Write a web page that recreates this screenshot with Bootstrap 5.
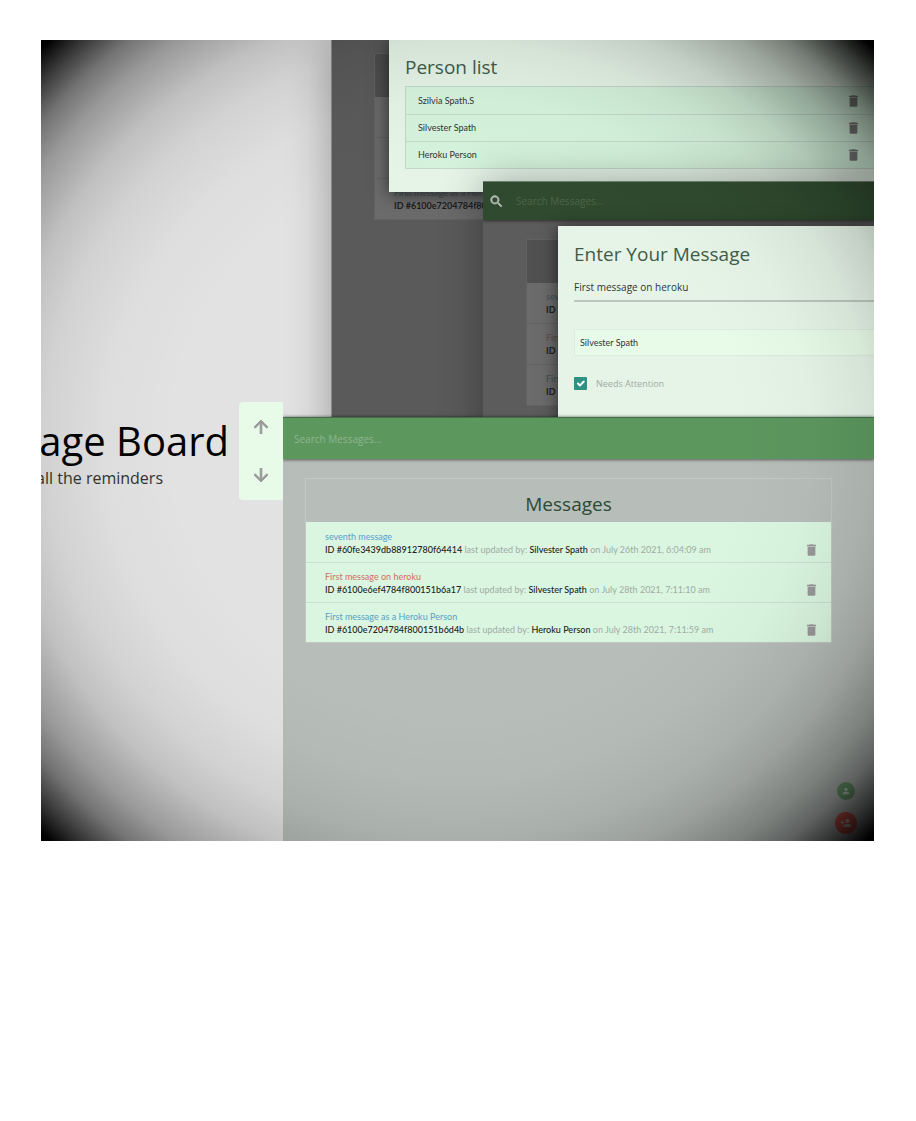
<!DOCTYPE html>
<html lang="en">
<head>
<meta charset="utf-8">
<meta name="viewport" content="width=device-width, initial-scale=1">
<title>Message Board</title>
<link href="https://cdn.jsdelivr.net/npm/bootstrap@5.3.0/dist/css/bootstrap.min.css" rel="stylesheet">
<style>
body { font-family: "Open Sans", "Noto Sans", sans-serif; background: #fff; }
.showcase { position: relative; margin: 40px 42px 0 41px; background: #e2e2e2; overflow: hidden; }
/* darkened corners over the whole showcase */
.showcase::after {
  content: ""; position: absolute; inset: 0; z-index: 5; pointer-events: none;
  background: radial-gradient(ellipse farthest-corner, transparent 48%, rgba(0,0,0,.02) 60%, rgba(0,0,0,.07) 70%, rgba(0,0,0,.15) 77%, rgba(0,0,0,.32) 85%, rgba(0,0,0,.49) 90%, rgba(0,0,0,.76) 95%, #000 99%);
}
.intro { flex: 0 0 242px; min-width: 0; overflow: hidden; padding-top: 20px; white-space: nowrap; }
.intro-text { padding: 6px 10px 0 0; }
.intro h1 { font-size: 40px; line-height: 48px; color: #000; }
.intro p { font-size: 16px; line-height: 26px; color: #333; padding-right: 66px; }
.pager { flex: 0 0 44px; height: 98px; padding: 18px 0; background: #e8fbe8; border-radius: 4px 0 0 4px; }
.plain { border: 0; background: none; padding: 0; line-height: 0; color: #999; }
.gallery { display: grid; flex: 1 1 0; min-width: 0; overflow: hidden; }
.shot { display: grid; grid-area: 1 / 1; grid-template-columns: minmax(0, 1fr); align-content: start; min-width: 0; overflow: hidden; box-shadow: 0 0 40px rgba(0,0,0,.32); }
.shot > * { grid-area: 1 / 1; }
.shot-people { margin-left: 48px; background: #5a5a5a; border-left: 1px solid #8a8a8a; }
.shot-entry { margin: 141px 0 0 200px; background: #5c5c5c; }
.shot-main { display: flex; flex-direction: column; margin-top: 377px; min-height: 424px; background: #b7bdb9; box-shadow: 0 0 3px rgba(0,0,0,.6); }
.topbar { height: 42px; background: #5c975e; padding: 0 11px; box-shadow: 0 1px 3px rgba(0,0,0,.5); border-top: 1px solid #40704a; }
.shot-entry .topbar { height: 39px; background: #2f4a2e; padding: 0 7px; gap: 13px; color: #b4bcb4; border-top-color: #6f7f6f; }
.topbar input { border: 0; background: none; padding: 0; font-size: 10px; line-height: 14px; color: #cfe3cf; width: 200px; outline: 0; }
.topbar input::placeholder { color: #90b591; opacity: 1; }
.shot-entry .topbar input::placeholder { color: #4c664c; }
.board { margin: 19px 42px 0 22px; border: 1px solid #c3c8c5; font-family: Lato, "Open Sans", sans-serif; font-size: 9px; line-height: 13px; }
.board h2 { height: 43px; padding-top: 13px; margin: 0; text-align: center; font-family: "Open Sans", sans-serif; font-size: 19px; line-height: 24px; color: #2c4a33; }
.board li { height: 40px; padding: 7px 15px 6px 19px; background: #daf6e0; list-style: none; white-space: nowrap; }
.board li + li { border-top: 1px solid #cbe0d2; }
.board a { color: #579fc9; text-decoration: none; }
.board a.alerted { color: #cf6d66; }
.board b { color: #222; font-weight: 500; }
.board .meta { color: #a0aba4; }
.dimmed { border-color: #626262; }
.dimmed h2 { background: #505050; color: #333; }
.dimmed li { background: #6b6b6b; }
.dimmed li + li { height: 41px; border-color: #626262; }
.dimmed a { color: #3f5057; }
.dimmed a.alerted { color: #5b4a48; }
.dimmed b { color: #1d1d1d; font-weight: 700; }
.shot-entry .board { margin: 19px 43px 0; }
.shot-people .board { margin: 13px 43px 0 42px; }
.panel { background: #e6f4e7; box-shadow: 0 2px 16px rgba(0,0,0,.6); color: #333; }
.panel h2 { font-size: 19px; line-height: 28px; color: #3f5c49; margin: 0; }
.people { margin-left: 57px; height: 152px; padding: 13px 0 0 16px; }
.people ul { margin: 5px 0 0; padding: 0; border: 1px solid #c4d8ca; border-right: 0; font-family: Lato, "Open Sans", sans-serif; font-size: 9px; background: #d5f3dc; }
.people li { height: 27px; padding: 0 16px 0 12px; list-style: none; }
.people li + li { border-top: 1px solid #c4d8ca; }
.people .plain { color: #777; }
.entry { margin: 45px 0 0 75px; height: 200px; padding: 14px 0 0 16px; }
.entry .line, .entry .pick { display: block; width: 100%; border: 0; border-radius: 0; outline: 0; color: #333; }
.entry .line { height: 27px; margin-top: 7px; padding: 0 0 1px; background: none; border-bottom: 2px solid #bcc6bd; font-size: 10px; }
.entry .pick { height: 27px; margin-top: 27px; padding: 0 5px; background: #e8fbe8; border: 1px solid #deecdf; border-right: 0; font-family: Lato, "Open Sans", sans-serif; font-size: 9px; appearance: none; }
.entry .tick { margin-top: 21px; gap: 9px; }
.entry .form-check-input { width: 13px; height: 13px; margin: 0; border: 0; border-radius: 1px; }
.entry .form-check-input:checked { background-color: #2e9182; }
.entry label { font-size: 9px; line-height: 13px; color: #a0aba2; }
.fabs { margin: auto 17px 7px 0; gap: 12px; }
.fab { border: 0; border-radius: 50%; padding: 0; color: #c8d2c8; width: 22px; height: 22px; background: #d8584c; }
.fab-sm { width: 18px; height: 18px; background: #6ba070; }
</style>
</head>
<body>
<svg class="d-none" xmlns="http://www.w3.org/2000/svg">
  <symbol id="trash" viewBox="5 3 14 18"><path fill="currentColor" d="M6 19c0 1.100.9 2 2 2h8c1.100 0 2-.9 2-2V7H6v12zM19 4h-3.500l-1-1h-5l-1 1H5v2h14V4z"/></symbol>
  <symbol id="up" viewBox="4 4 16 16"><path fill="currentColor" d="M4 12l1.400 1.400L11 7.800V20h2V7.800l5.600 5.600L20 12l-8-8z" stroke="currentColor"/></symbol>
  <symbol id="down" viewBox="4 4 16 16"><path fill="currentColor" d="M20 12l-1.400-1.400L13 16.200V4h-2v12.200l-5.600-5.600L4 12l8 8z" stroke="currentColor"/></symbol>
  <symbol id="search" viewBox="2 2 20 20"><path fill="currentColor" stroke="currentColor" d="M15.500 14h-.8l-.3-.3A6.500 6.500 0 1 0 13.700 14.400l.3.300v.8l5 5 1.500-1.500-5-5zm-6 0a4.500 4.500 0 1 1 0-9 4.500 4.500 0 0 1 0 9z"/></symbol>
  <symbol id="person" viewBox="0 0 24 24"><path fill="currentColor" d="M12 12a4 4 0 1 0 0-8 4 4 0 0 0 0 8zm0 2c-2.700 0-8 1.300-8 4v2h16v-2c0-2.700-5.300-4-8-4z"/></symbol>
  <symbol id="add-person" viewBox="0 0 24 24"><path fill="currentColor" d="M15 12a4 4 0 1 0 0-8 4 4 0 0 0 0 8zM6 10V7H4v3H1v2h3v3h2v-3h3v-2H6zm9 4c-2.700 0-8 1.300-8 4v2h16v-2c0-2.700-5.300-4-8-4z"/></symbol>
</svg>

<main class="showcase d-flex">
  <section class="intro d-flex align-items-center justify-content-end">
    <div class="intro-text d-flex flex-column align-items-end">
      <h1 class="m-0 fw-normal">Message Board</h1>
      <p class="m-0">all the reminders</p>
    </div>
    <div class="pager d-flex flex-column align-items-center justify-content-between">
      <button class="plain" aria-label="Previous"><svg width="14" height="14"><use href="#up"/></svg></button>
      <button class="plain" aria-label="Next"><svg width="14" height="14"><use href="#down"/></svg></button>
    </div>
  </section>

  <div class="gallery">
    <section class="shot shot-people">
      <div class="board dimmed">
        <h2></h2>
        <ul class="m-0 p-0">
          <li></li>
          <li></li>
          <li><a href="#">First message as a Heroku Person</a><br><b>ID #6100e7204784f800151b6d4b</b></li>
        </ul>
      </div>
      <div class="panel people">
        <h2 class="fw-normal">Person list</h2>
        <ul>
          <li class="d-flex align-items-center justify-content-between">Szilvia Spath.S <button class="plain" aria-label="Delete"><svg width="9" height="12"><use href="#trash"/></svg></button></li>
          <li class="d-flex align-items-center justify-content-between">Silvester Spath <button class="plain" aria-label="Delete"><svg width="9" height="12"><use href="#trash"/></svg></button></li>
          <li class="d-flex align-items-center justify-content-between">Heroku Person <button class="plain" aria-label="Delete"><svg width="9" height="12"><use href="#trash"/></svg></button></li>
        </ul>
      </div>
    </section>

    <section class="shot shot-entry">
      <div>
        <div class="topbar d-flex align-items-center">
          <svg width="13" height="13"><use href="#search"/></svg>
          <input type="search" placeholder="Search Messages..." aria-label="Search messages">
        </div>
        <div class="board dimmed">
          <h2></h2>
          <ul class="m-0 p-0">
            <li><a href="#">seventh</a><br><b>ID</b></li>
            <li><a href="#" class="alerted">First</a><br><b>ID</b></li>
            <li><a href="#">First</a><br><b>ID</b></li>
          </ul>
        </div>
      </div>
      <form class="panel entry">
        <h2 class="fw-normal">Enter Your Message</h2>
        <input class="line" type="text" value="First message on heroku" aria-label="Message">
        <select class="pick" aria-label="Person"><option>Silvester Spath</option></select>
        <div class="tick d-flex align-items-center">
          <input class="form-check-input" type="checkbox" id="attention" checked>
          <label for="attention">Needs Attention</label>
        </div>
      </form>
    </section>

    <section class="shot shot-main">
      <div class="topbar d-flex align-items-center">
        <input type="search" placeholder="Search Messages..." aria-label="Search messages">
      </div>
      <div class="board">
        <h2 class="fw-normal">Messages</h2>
        <ul class="m-0 p-0">
          <li class="d-flex justify-content-between align-items-end">
            <div><a href="#">seventh message</a><div class="meta"><b>ID #60fe3439db88912780f64414</b> last updated by: <b>Silvester Spath</b> on July 26th 2021, 6:04:09 am</div></div>
            <button class="plain" aria-label="Delete"><svg width="9" height="12"><use href="#trash"/></svg></button>
          </li>
          <li class="d-flex justify-content-between align-items-end">
            <div><a href="#" class="alerted">First message on heroku</a><div class="meta"><b>ID #6100e6ef4784f800151b6a17</b> last updated by: <b>Silvester Spath</b> on July 28th 2021, 7:11:10 am</div></div>
            <button class="plain" aria-label="Delete"><svg width="9" height="12"><use href="#trash"/></svg></button>
          </li>
          <li class="d-flex justify-content-between align-items-end">
            <div><a href="#">First message as a Heroku Person</a><div class="meta"><b>ID #6100e7204784f800151b6d4b</b> last updated by: <b>Heroku Person</b> on July 28th 2021, 7:11:59 am</div></div>
            <button class="plain" aria-label="Delete"><svg width="9" height="12"><use href="#trash"/></svg></button>
          </li>
        </ul>
      </div>
      <div class="fabs d-flex flex-column align-items-center align-self-end">
        <button class="fab fab-sm d-flex align-items-center justify-content-center" aria-label="People"><svg width="10" height="10"><use href="#person"/></svg></button>
        <button class="fab d-flex align-items-center justify-content-center" aria-label="Add person"><svg width="12" height="12"><use href="#add-person"/></svg></button>
      </div>
    </section>
  </div>
</main>
<script src="https://cdn.jsdelivr.net/npm/bootstrap@5.3.0/dist/js/bootstrap.bundle.min.js"></script>
</body>
</html>
